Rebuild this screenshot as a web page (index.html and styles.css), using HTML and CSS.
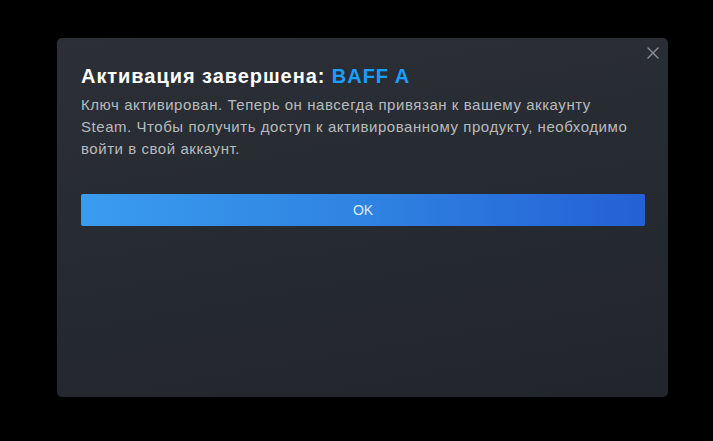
FILE: index.html
```html
<!DOCTYPE html>
<html lang="ru">
<head>
<meta charset="utf-8">
<link rel="stylesheet" href="styles.css">
</head>
<body>
<div class="screen">
  <div class="dialog">
    <button class="close" aria-label="Закрыть">
      <svg width="12" height="12" viewBox="0 0 12 12"><path d="M1 1L11 11M11 1L1 11" stroke="#8b929a" stroke-width="1.4" stroke-linecap="round"/></svg>
    </button>
    <h1 class="title">Активация завершена: <span class="product">BAFF A</span></h1>
    <p class="text">Ключ активирован. Теперь он навсегда привязан к вашему аккаунту Steam. Чтобы получить доступ к активированному продукту, необходимо войти в свой аккаунт.</p>
    <button class="ok">OK</button>
  </div>
</div>
</body>
</html>
```
FILE: styles.css
```css
html, body {
  margin: 0;
  padding: 0;
  background: #000;
  width: 713px;
  height: 441px;
  overflow: hidden;
}
.screen {
  padding: 38px 45px 44px 57px;
  box-sizing: border-box;
  height: 441px;
}
.dialog {
  position: relative;
  height: 359px;
  width: 611px;
  box-sizing: border-box;
  padding: 24px 23px 0 24px;
  border-radius: 5px;
  background: linear-gradient(170deg, #2c2f36 0%, #262a31 50%, #22252c 100%);
  font-family: "Liberation Sans", Arial, sans-serif;
}
.close {
  position: absolute;
  top: 8px;
  right: 8px;
  width: 14px;
  height: 14px;
  padding: 1px;
  border: 0;
  background: none;
  display: flex;
  align-items: center;
  justify-content: center;
}
.title {
  margin: 0;
  font-size: 20px;
  line-height: 28px;
  font-weight: bold;
  letter-spacing: 0.95px;
  color: #ffffff;
}
.product {
  color: #1a9fff;
}
.text {
  margin: 4px 0 0;
  font-size: 15px;
  line-height: 22px;
  letter-spacing: 0.55px;
  color: #b8bcbf;
  width: 557px;
}
.ok {
  display: block;
  width: 100%;
  height: 32px;
  margin-top: 34px;
  border: 0;
  border-radius: 2px;
  background: linear-gradient(90deg, #3a9cef 0%, #2f83e1 50%, #2560d5 100%);
  color: #dbe9f8;
  font-family: "Liberation Sans", Arial, sans-serif;
  font-size: 14px;
}
```
